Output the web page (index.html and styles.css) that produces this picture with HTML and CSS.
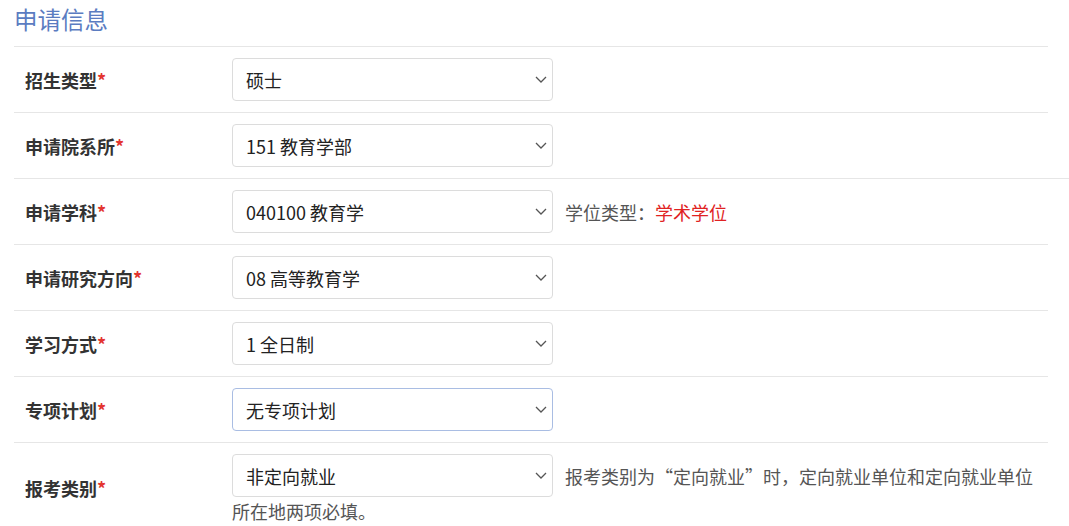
FILE: index.html
```html
<!DOCTYPE html>
<html lang="zh-CN">
<head>
<meta charset="utf-8">
<link rel="stylesheet" href="styles.css">
</head>
<body>
<div class="panel">
  <h2 class="title">申请信息</h2>
  <div class="row">
    <div class="label">招生类型<span class="req">*</span></div>
    <div class="field">
      <div class="select"><span class="val">硕士</span><svg class="chev" width="12" height="7" viewBox="0 0 12 7"><path d="M1 1 L6 6 L11 1" fill="none" stroke="#555" stroke-width="1.3"/></svg></div>
    </div>
  </div>
  <div class="row">
    <div class="label">申请院系所<span class="req">*</span></div>
    <div class="field">
      <div class="select"><span class="val">151 教育学部</span><svg class="chev" width="12" height="7" viewBox="0 0 12 7"><path d="M1 1 L6 6 L11 1" fill="none" stroke="#555" stroke-width="1.3"/></svg></div>
    </div>
  </div>
  <div class="row wide">
    <div class="label">申请学科<span class="req">*</span></div>
    <div class="field">
      <div class="select"><span class="val">040100 教育学</span><svg class="chev" width="12" height="7" viewBox="0 0 12 7"><path d="M1 1 L6 6 L11 1" fill="none" stroke="#555" stroke-width="1.3"/></svg></div><span class="help">学位类型：<span class="red">学术学位</span></span>
    </div>
  </div>
  <div class="row">
    <div class="label">申请研究方向<span class="req">*</span></div>
    <div class="field">
      <div class="select"><span class="val">08 高等教育学</span><svg class="chev" width="12" height="7" viewBox="0 0 12 7"><path d="M1 1 L6 6 L11 1" fill="none" stroke="#555" stroke-width="1.3"/></svg></div>
    </div>
  </div>
  <div class="row">
    <div class="label">学习方式<span class="req">*</span></div>
    <div class="field">
      <div class="select"><span class="val">1 全日制</span><svg class="chev" width="12" height="7" viewBox="0 0 12 7"><path d="M1 1 L6 6 L11 1" fill="none" stroke="#555" stroke-width="1.3"/></svg></div>
    </div>
  </div>
  <div class="row">
    <div class="label">专项计划<span class="req">*</span></div>
    <div class="field">
      <div class="select focus"><span class="val">无专项计划</span><svg class="chev" width="12" height="7" viewBox="0 0 12 7"><path d="M1 1 L6 6 L11 1" fill="none" stroke="#555" stroke-width="1.3"/></svg></div>
    </div>
  </div>
  <div class="row">
    <div class="label">报考类别<span class="req">*</span></div>
    <div class="field">
      <div class="select"><span class="val">非定向就业</span><svg class="chev" width="12" height="7" viewBox="0 0 12 7"><path d="M1 1 L6 6 L11 1" fill="none" stroke="#555" stroke-width="1.3"/></svg></div><span class="help">报考类别为“定向就业”时，定向就业单位和定向就业单位所在地两项必填。</span>
    </div>
  </div>
</div>
</body>
</html>
```
FILE: styles.css
```css
html, body {
  margin: 0;
  padding: 0;
  background: #fff;
}
body {
  font-family: "Noto Sans CJK SC", "Noto Sans", sans-serif;
  color: #333;
}
.panel {
  padding-left: 14px;
  width: 1034px;
}
.title {
  margin: 0;
  height: 46px;
  font-size: 23.5px;
  line-height: 38px;
  font-weight: normal;
  color: #5b7cc1;
}
.row {
  display: flex;
  align-items: center;
  border-top: 1px solid #e6e6e6;
  padding: 11px 0 11px 11px;
}
.row.wide {
  margin-right: -21px;
}
.label {
  width: 207px;
  flex: none;
  font-size: 18px;
  font-weight: bold;
  color: #333;
}
.req {
  color: #e3342f;
}
.field {
  flex: 1;
  font-size: 18px;
  line-height: 22px;
}
.select {
  display: inline-flex;
  align-items: center;
  justify-content: space-between;
  vertical-align: middle;
  box-sizing: border-box;
  width: 321px;
  height: 43px;
  padding: 0 5px 0 13px;
  border: 1px solid #dcdcdc;
  border-radius: 4px;
  background: #fff;
  color: #222;
}
.select.focus {
  border-color: #a9bde3;
}
.chev {
  flex: none;
}
.help {
  margin-left: 12px;
  color: #555;
  vertical-align: middle;
}
.red {
  color: #e02222;
}
```
